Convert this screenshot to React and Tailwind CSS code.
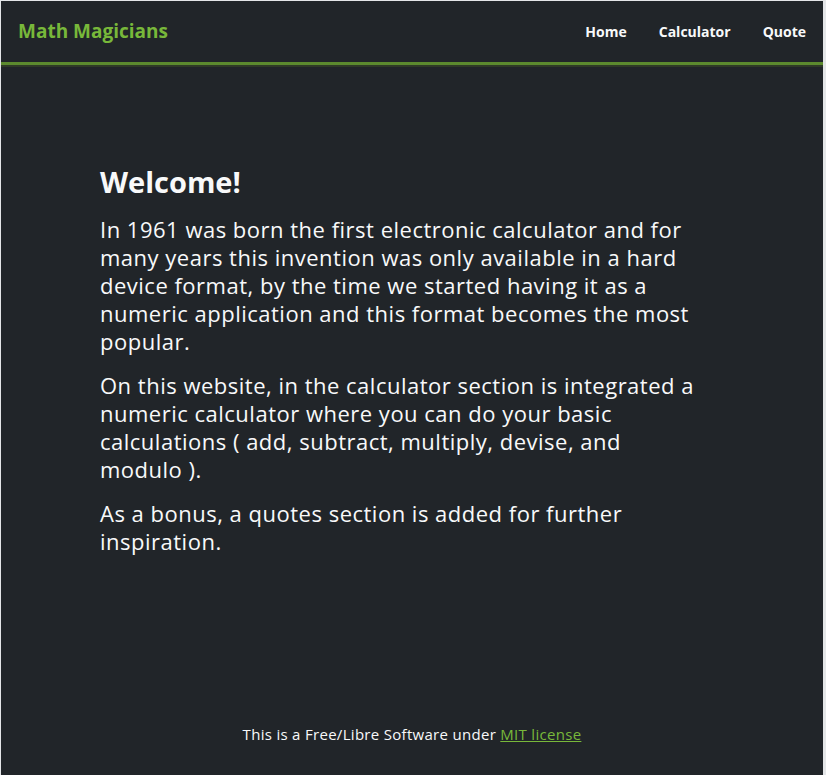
export default function App() {
  return (
    <div className="bg-[#e4e6e8] pt-px pl-px pr-[3px] font-['Open_Sans','Liberation_Sans',sans-serif]">
      <div className="flex h-[774px] flex-col bg-[#212529] text-[#f8f9fa]">
        <header className="flex h-[64px] items-center justify-between border-b-[3px] border-[#5c8a2e] px-[17px] shadow-[0_2px_0_#2f3a27]">
          <a href="#" className="text-[19px] font-bold text-[#78b83a]">Math Magicians</a>
          <nav className="flex items-center gap-[32px] text-[14px] font-bold">
            <a href="#">Home</a>
            <a href="#">Calculator</a>
            <a href="#">Quote</a>
          </nav>
        </header>

        <main className="flex-1 px-[99px] pt-[97px]">
          <h1 className="mb-[13px] text-[29px] font-bold leading-[40px]">Welcome!</h1>
          <div className="w-[620px] text-[22px] leading-[28px] tracking-[0.5px]">
            <p className="mb-[16px]">
              In 1961 was born the first electronic calculator and for many years this invention was only available in a hard device format, by the time we started having it as a numeric application and this format becomes the most popular.
            </p>
            <p className="mb-[16px]">
              On this website, in the calculator section is integrated a numeric calculator where you can do your basic calculations ( add, subtract, multiply, devise, and {"modulo\u00a0)."}
            </p>
            <p>As a bonus, a quotes section is added for further inspiration.</p>
          </div>
        </main>

        <footer className="pb-[30px] text-center text-[15px] tracking-[0.3px]">
          This is a Free/Libre Software under{" "}
          <a href="#" className="text-[#78b83a] underline">MIT license</a>
        </footer>
      </div>
    </div>
  );
}
